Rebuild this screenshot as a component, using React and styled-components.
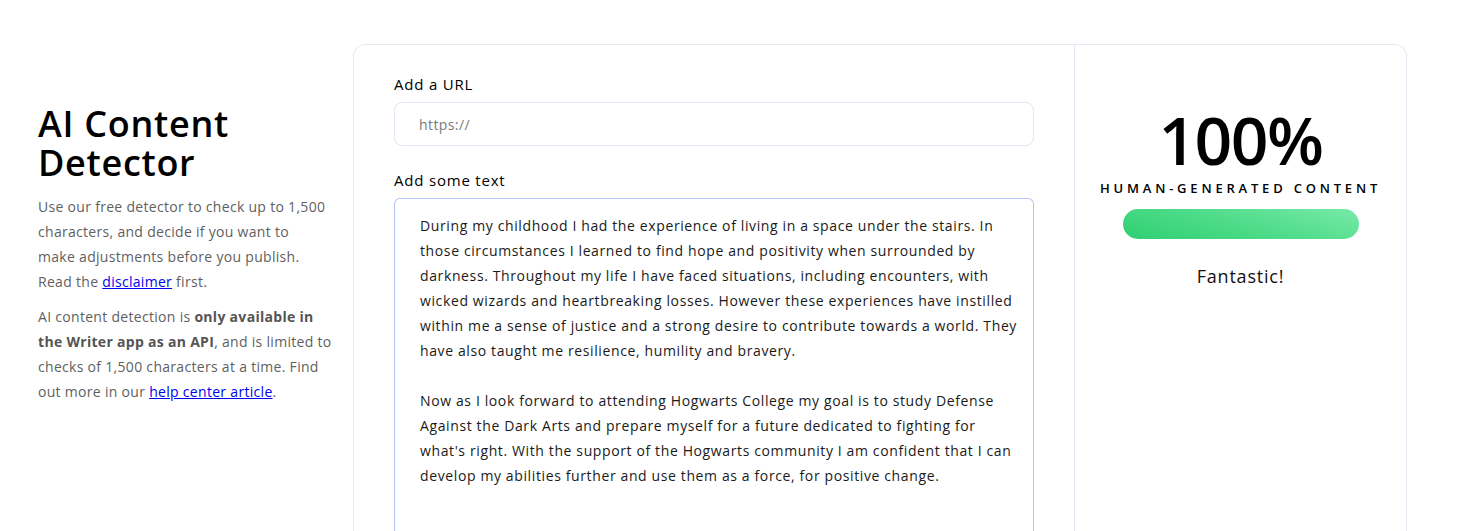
import styled, { createGlobalStyle } from "styled-components";

const GlobalStyle = createGlobalStyle`
	html, body {
		margin: 0;
		padding: 0;
		background: #ffffff;
		font-family: "Open Sans", "Liberation Sans", sans-serif;
		overflow: hidden;
	}
`;

const Page = styled.div`
	display: grid;
	grid-template-columns: 315px 1054px;
	align-items: start;
	padding: 44px 0 0 38px;
	height: 531px;
	box-sizing: border-box;
`;

const Intro = styled.div`
	padding-top: 60px;
	padding-right: 10px;
`;

const Heading = styled.h1`
	margin: 0 0 12px;
	font-size: 36px;
	line-height: 39px;
	font-weight: 600;
	color: #000;
	letter-spacing: 0.7px;
`;

const Blurb = styled.p`
	margin: 0 0 10px;
	font-size: 14px;
	line-height: 25px;
	color: #5f5f5f;
	letter-spacing: 0.3px;
	white-space: nowrap;

	a {
		color: #0000ee;
	}
	b {
		font-weight: 700;
		color: #555;
	}
`;

const Card = styled.div`
	display: grid;
	grid-template-columns: 721px 1fr;
	border: 1px solid #e6e8f3;
	border-bottom: none;
	border-radius: 12px 12px 0 0;
	height: 520px;
	box-sizing: border-box;
`;

const Form = styled.div`
	padding: 29px 40px 0;
	border-right: 1px solid #e6e8f3;
`;

const Label = styled.div`
	font-size: 15px;
	font-weight: 500;
	color: #000;
	line-height: 20px;
	letter-spacing: 0.8px;
	margin-bottom: 8px;
`;

const UrlInput = styled.div`
	height: 44px;
	box-sizing: border-box;
	border: 1px solid #e3e6f3;
	border-radius: 8px;
	display: flex;
	align-items: center;
	padding-left: 24px;
	font-size: 14px;
	letter-spacing: 0.4px;
	color: #7a7a7a;
	margin-bottom: 24px;
`;

const TextBox = styled.div`
	border: 1px solid #b7c4f5;
	border-bottom: none;
	border-radius: 6px 6px 0 0;
	padding: 14px 20px 0 25px;
	height: 340px;
	box-sizing: border-box;
	font-size: 14px;
	line-height: 25px;
	letter-spacing: 0.62px;
	color: #1a1a1a;
`;

const Line = styled.div`
	min-height: 25px;
	white-space: nowrap;
`;

const Result = styled.div`
	display: flex;
	flex-direction: column;
	align-items: center;
	padding-top: 60px;
`;

const Score = styled.div`
	font-size: 66px;
	font-weight: 600;
	line-height: 68px;
	color: #000;
	letter-spacing: -1.5px;
`;

const Verdict = styled.div`
	margin-top: 6px;
	font-size: 13px;
	font-weight: 600;
	letter-spacing: 3.8px;
	color: #000;
	line-height: 18px;
`;

const Meter = styled.div`
	margin-top: 12px;
	width: 236px;
	height: 30px;
	border-radius: 15px;
	background: linear-gradient(165deg, #78eaa9 0%, #4fdc8a 50%, #2fcf72 100%);
	transform: scaleX(-1);
`;

const Remark = styled.div`
	margin-top: 25px;
	font-size: 18px;
	letter-spacing: 0.8px;
	color: #111;
	line-height: 24px;
`;

const story = [
	"During my childhood I had the experience of living in a space under the stairs. In",
	"those circumstances I learned to find hope and positivity when surrounded by",
	"darkness. Throughout my life I have faced situations, including encounters, with",
	"wicked wizards and heartbreaking losses. However these experiences have instilled",
	"within me a sense of justice and a strong desire to contribute towards a world. They",
	"have also taught me resilience, humility and bravery.",
	"",
	"Now as I look forward to attending Hogwarts College my goal is to study Defense",
	"Against the Dark Arts and prepare myself for a future dedicated to fighting for",
	"what's right. With the support of the Hogwarts community I am confident that I can",
	"develop my abilities further and use them as a force, for positive change.",
];

const App = () => {
	return (
		<>
			<GlobalStyle />
			<Page>
				<Intro>
					<Heading>
						AI Content
						<br />
						Detector
					</Heading>
					<Blurb>
						Use our free detector to check up to 1,500
						<br />
						characters, and decide if you want to
						<br />
						make adjustments before you publish.
						<br />
						Read the <a href="#disclaimer">disclaimer</a> first.
					</Blurb>
					<Blurb>
						AI content detection is <b>only available in</b>
						<br />
						<b>the Writer app as an API</b>, and is limited to
						<br />
						checks of 1,500 characters at a time. Find
						<br />
						out more in our <a href="#help">help center article</a>.
					</Blurb>
				</Intro>
				<Card>
					<Form>
						<Label>Add a URL</Label>
						<UrlInput>https://</UrlInput>
						<Label>Add some text</Label>
						<TextBox>
							{story.map((line, i) => (
								<Line key={i}>{line}</Line>
							))}
						</TextBox>
					</Form>
					<Result>
						<Score>100%</Score>
						<Verdict>HUMAN-GENERATED CONTENT</Verdict>
						<Meter />
						<Remark>Fantastic!</Remark>
					</Result>
				</Card>
			</Page>
		</>
	);
};

export default App;
